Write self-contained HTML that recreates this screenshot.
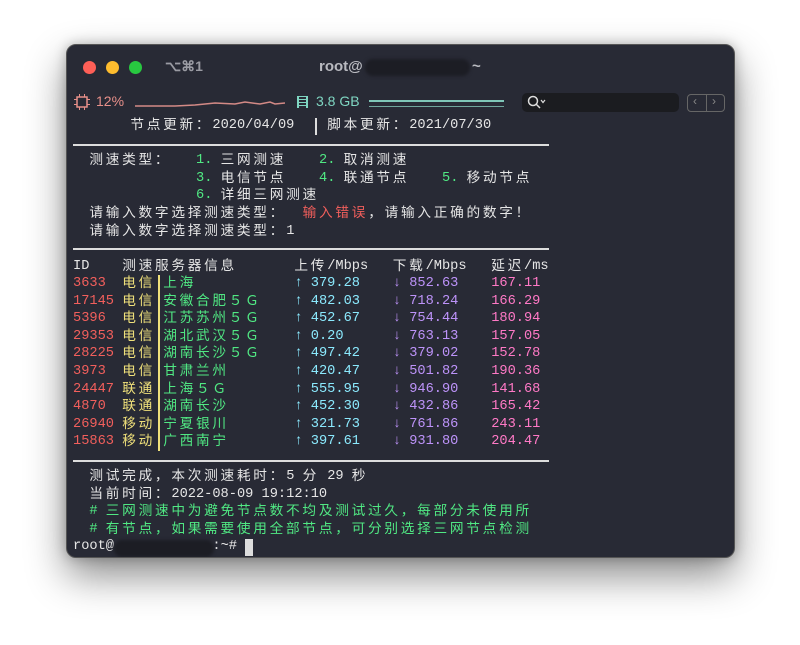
<!DOCTYPE html>
<html><head><meta charset="utf-8"><style>
*{margin:0;padding:0;box-sizing:border-box}
body{width:800px;height:645px;background:#fff;position:relative;overflow:hidden;font-family:"Liberation Sans",sans-serif}
.win{position:absolute;left:66px;top:44px;width:669px;height:514px;background:#282a35;border-radius:10px;border:1px solid #555;box-shadow:0 18px 40px rgba(0,0,0,.45),0 0 12px rgba(0,0,0,.25);overflow:hidden}
.dot{position:absolute;top:16px;width:13px;height:13px;border-radius:50%}
.L{position:absolute;left:0;width:600px;height:18px;font-family:"Liberation Mono","DejaVu Sans Mono",monospace;font-size:13.67px;line-height:18px;color:#e6e6e6}
.L>span{position:absolute;top:0;white-space:pre}
.c{font-family:"Noto Sans CJK SC",sans-serif;font-size:13.67px;letter-spacing:2.73px}
.L>span.c{top:-3px}
.r{color:#f25f5c}.y{color:#efe07a}.g{color:#50e883}.u{color:#8be9fd}.p{color:#bd93f9}.k{color:#ff79c6}
.hr{position:absolute;left:6px;width:476px;height:2px;background:#ddd}
.blur{position:absolute;background:#1c1d24;border-radius:8px;filter:blur(1.5px)}
</style></head><body>
<div class="win">
<div class="dot" style="left:16px;background:#fe5f57"></div>
<div class="dot" style="left:39px;background:#febc2e"></div>
<div class="dot" style="left:62px;background:#28c840"></div>
<div style="position:absolute;left:98px;top:13px;color:#9a9ba3;font-size:14px;font-weight:bold">⌥⌘1</div>
<div style="position:absolute;left:252px;top:13px;color:#b9bac0;font-size:15px;font-weight:bold">root@</div>
<div class="blur" style="left:298px;top:14px;width:105px;height:17px"></div>
<div style="position:absolute;left:405px;top:13px;color:#b9bac0;font-size:15px;font-weight:bold">~</div>
<svg style="position:absolute;left:7px;top:49px" width="16" height="16"><rect x="3" y="3" width="10" height="10" fill="none" stroke="#e8908a" stroke-width="1.5"/><g stroke="#e8908a" stroke-width="1"><line x1="5.5" y1="0" x2="5.5" y2="3"/><line x1="10.5" y1="0" x2="10.5" y2="3"/><line x1="5.5" y1="13" x2="5.5" y2="16"/><line x1="10.5" y1="13" x2="10.5" y2="16"/><line x1="0" y1="5.5" x2="3" y2="5.5"/><line x1="0" y1="10.5" x2="3" y2="10.5"/><line x1="13" y1="5.5" x2="16" y2="5.5"/><line x1="13" y1="10.5" x2="16" y2="10.5"/></g></svg>
<div style="position:absolute;left:29px;top:48px;color:#e8908a;font-size:14px">12%</div>
<svg style="position:absolute;left:68px;top:52px" width="150" height="12"><polyline fill="none" stroke="#d48a86" stroke-width="1.5" points="0,9 40,9 60,8 80,6 100,7 110,5 125,7 135,5 140,7 150,6"/></svg>
<div style="position:absolute;left:230px;top:51px;width:11px;height:12px;border-left:2px solid #7fd6c2;border-right:2px solid #7fd6c2;background:repeating-linear-gradient(#7fd6c2 0 1px,transparent 1px 3px)"></div>
<div style="position:absolute;left:249px;top:48px;color:#7fd6c2;font-size:14px">3.8 GB</div>
<div style="position:absolute;left:302px;top:55px;width:135px;height:2px;background:#7fc6b8"></div>
<div style="position:absolute;left:302px;top:61px;width:135px;height:1px;background:#6fa69c"></div>
<div style="position:absolute;left:455px;top:48px;width:157px;height:19px;background:#1b1c20;border-radius:5px"></div>
<svg style="position:absolute;left:460px;top:50px" width="22" height="15"><circle cx="6" cy="6" r="4.5" fill="none" stroke="#ddd" stroke-width="1.5"/><line x1="9" y1="9" x2="13" y2="13" stroke="#ddd" stroke-width="1.5"/><polyline points="14,5 16,7.5 18,5" fill="none" stroke="#ddd" stroke-width="1.2"/></svg>
<div style="position:absolute;left:620px;top:49px;width:38px;height:18px;border:1px solid #666;border-radius:4px"></div>
<div style="position:absolute;left:639px;top:49px;width:1px;height:18px;background:#666"></div>
<div style="position:absolute;left:626px;top:49px;color:#888;font-size:12px">‹</div>
<div style="position:absolute;left:645px;top:49px;color:#888;font-size:12px">›</div>
<div class="hr" style="top:99px"></div>
<div class="hr" style="top:203px"></div>
<div class="hr" style="top:415px"></div>
<div style="position:absolute;left:248px;top:73px;width:1.5px;height:17px;background:#ddd"></div>
<div style="position:absolute;left:91px;top:230px;width:1.5px;height:176px;background:#efe07a"></div>

<div class="L" style="top:72.2px"><span class="c" style="left:63.4px">节点更新：</span><span style="left:145.4px">2020/04/09</span><span class="c" style="left:260.2px">脚本更新：</span><span style="left:342.2px">2021/07/30</span></div>

<div class="L" style="top:107.3px"><span class="c" style="left:22.4px">测速类型：</span><span class="g" style="left:129px">1.</span><span class="c" style="left:153.6px">三网测速</span><span class="g" style="left:252px">2.</span><span class="c" style="left:276.6px">取消测速</span></div>
<div class="L" style="top:124.9px"><span class="g" style="left:129px">3.</span><span class="c" style="left:153.6px">电信节点</span><span class="g" style="left:252px">4.</span><span class="c" style="left:276.6px">联通节点</span><span class="g" style="left:375px">5.</span><span class="c" style="left:399.6px">移动节点</span></div>
<div class="L" style="top:142.4px"><span class="g" style="left:129px">6.</span><span class="c" style="left:153.6px">详细三网测速</span></div>
<div class="L" style="top:160px"><span class="c" style="left:22.4px">请输入数字选择测速类型：</span><span class="c r" style="left:235.6px">输入错误</span><span class="c" style="left:301.2px">，请输入正确的数字！</span></div>
<div class="L" style="top:177.5px"><span class="c" style="left:22.4px">请输入数字选择测速类型：</span><span style="left:219.2px">1</span></div>

<div class="L" style="top:212.6px"><span style="left:6px">ID</span><span class="c" style="left:55.2px">测速服务器信息</span><span class="c" style="left:227.4px">上传</span><span style="left:260.2px">/Mbps</span><span class="c" style="left:325.8px">下载</span><span style="left:358.6px">/Mbps</span><span class="c" style="left:424.2px">延迟</span><span style="left:457px">/ms</span></div>

<div class="L" style="top:230.2px"><span class="r" style="left:6px">3633</span><span class="c y" style="left:55.2px">电信</span><span class="c g" style="left:96.2px">上海</span><span class="u" style="left:227.4px">↑</span><span class="u" style="left:243.8px">379.28</span><span class="p" style="left:325.8px">↓</span><span class="p" style="left:342.2px">852.63</span><span class="k" style="left:424.2px">167.11</span></div>
<div class="L" style="top:247.7px"><span class="r" style="left:6px">17145</span><span class="c y" style="left:55.2px">电信</span><span class="c g" style="left:96.2px">安徽合肥５Ｇ</span><span class="u" style="left:227.4px">↑</span><span class="u" style="left:243.8px">482.03</span><span class="p" style="left:325.8px">↓</span><span class="p" style="left:342.2px">718.24</span><span class="k" style="left:424.2px">166.29</span></div>
<div class="L" style="top:265.3px"><span class="r" style="left:6px">5396</span><span class="c y" style="left:55.2px">电信</span><span class="c g" style="left:96.2px">江苏苏州５Ｇ</span><span class="u" style="left:227.4px">↑</span><span class="u" style="left:243.8px">452.67</span><span class="p" style="left:325.8px">↓</span><span class="p" style="left:342.2px">754.44</span><span class="k" style="left:424.2px">180.94</span></div>
<div class="L" style="top:282.8px"><span class="r" style="left:6px">29353</span><span class="c y" style="left:55.2px">电信</span><span class="c g" style="left:96.2px">湖北武汉５Ｇ</span><span class="u" style="left:227.4px">↑</span><span class="u" style="left:243.8px">0.20</span><span class="p" style="left:325.8px">↓</span><span class="p" style="left:342.2px">763.13</span><span class="k" style="left:424.2px">157.05</span></div>
<div class="L" style="top:300.4px"><span class="r" style="left:6px">28225</span><span class="c y" style="left:55.2px">电信</span><span class="c g" style="left:96.2px">湖南长沙５Ｇ</span><span class="u" style="left:227.4px">↑</span><span class="u" style="left:243.8px">497.42</span><span class="p" style="left:325.8px">↓</span><span class="p" style="left:342.2px">379.02</span><span class="k" style="left:424.2px">152.78</span></div>
<div class="L" style="top:317.9px"><span class="r" style="left:6px">3973</span><span class="c y" style="left:55.2px">电信</span><span class="c g" style="left:96.2px">甘肃兰州</span><span class="u" style="left:227.4px">↑</span><span class="u" style="left:243.8px">420.47</span><span class="p" style="left:325.8px">↓</span><span class="p" style="left:342.2px">501.82</span><span class="k" style="left:424.2px">190.36</span></div>
<div class="L" style="top:335.5px"><span class="r" style="left:6px">24447</span><span class="c y" style="left:55.2px">联通</span><span class="c g" style="left:96.2px">上海５Ｇ</span><span class="u" style="left:227.4px">↑</span><span class="u" style="left:243.8px">555.95</span><span class="p" style="left:325.8px">↓</span><span class="p" style="left:342.2px">946.90</span><span class="k" style="left:424.2px">141.68</span></div>
<div class="L" style="top:353px"><span class="r" style="left:6px">4870</span><span class="c y" style="left:55.2px">联通</span><span class="c g" style="left:96.2px">湖南长沙</span><span class="u" style="left:227.4px">↑</span><span class="u" style="left:243.8px">452.30</span><span class="p" style="left:325.8px">↓</span><span class="p" style="left:342.2px">432.86</span><span class="k" style="left:424.2px">165.42</span></div>
<div class="L" style="top:370.6px"><span class="r" style="left:6px">26940</span><span class="c y" style="left:55.2px">移动</span><span class="c g" style="left:96.2px">宁夏银川</span><span class="u" style="left:227.4px">↑</span><span class="u" style="left:243.8px">321.73</span><span class="p" style="left:325.8px">↓</span><span class="p" style="left:342.2px">761.86</span><span class="k" style="left:424.2px">243.11</span></div>
<div class="L" style="top:388.1px"><span class="r" style="left:6px">15863</span><span class="c y" style="left:55.2px">移动</span><span class="c g" style="left:96.2px">广西南宁</span><span class="u" style="left:227.4px">↑</span><span class="u" style="left:243.8px">397.61</span><span class="p" style="left:325.8px">↓</span><span class="p" style="left:342.2px">931.80</span><span class="k" style="left:424.2px">204.47</span></div>

<div class="L" style="top:423.2px"><span class="c" style="left:22.4px">测试完成，本次测速耗时：</span><span style="left:219.2px">5</span><span class="c" style="left:235.6px">分</span><span style="left:260.2px">29</span><span class="c" style="left:284.8px">秒</span></div>
<div class="L" style="top:440.8px"><span class="c" style="left:22.4px">当前时间：</span><span style="left:104.4px">2022-08-09 19:12:10</span></div>
<div class="L" style="top:458.3px"><span class="g" style="left:22.4px">#</span><span class="c g" style="left:38.8px">三网测速中为避免节点数不均及测试过久，每部分未使用所</span></div>
<div class="L" style="top:475.9px"><span class="g" style="left:22.4px">#</span><span class="c g" style="left:38.8px">有节点，如果需要使用全部节点，可分别选择三网节点检测</span></div>
<div class="L" style="top:493.4px"><span style="left:6px">root@</span><span style="left:145.4px">:~#</span><span style="left:178.2px;width:8.2px;height:17px;top:1px;background:#ddd"></span></div>
<div class="blur" style="left:47px;top:495px;width:100px;height:17px"></div>
</div>
</body></html>
